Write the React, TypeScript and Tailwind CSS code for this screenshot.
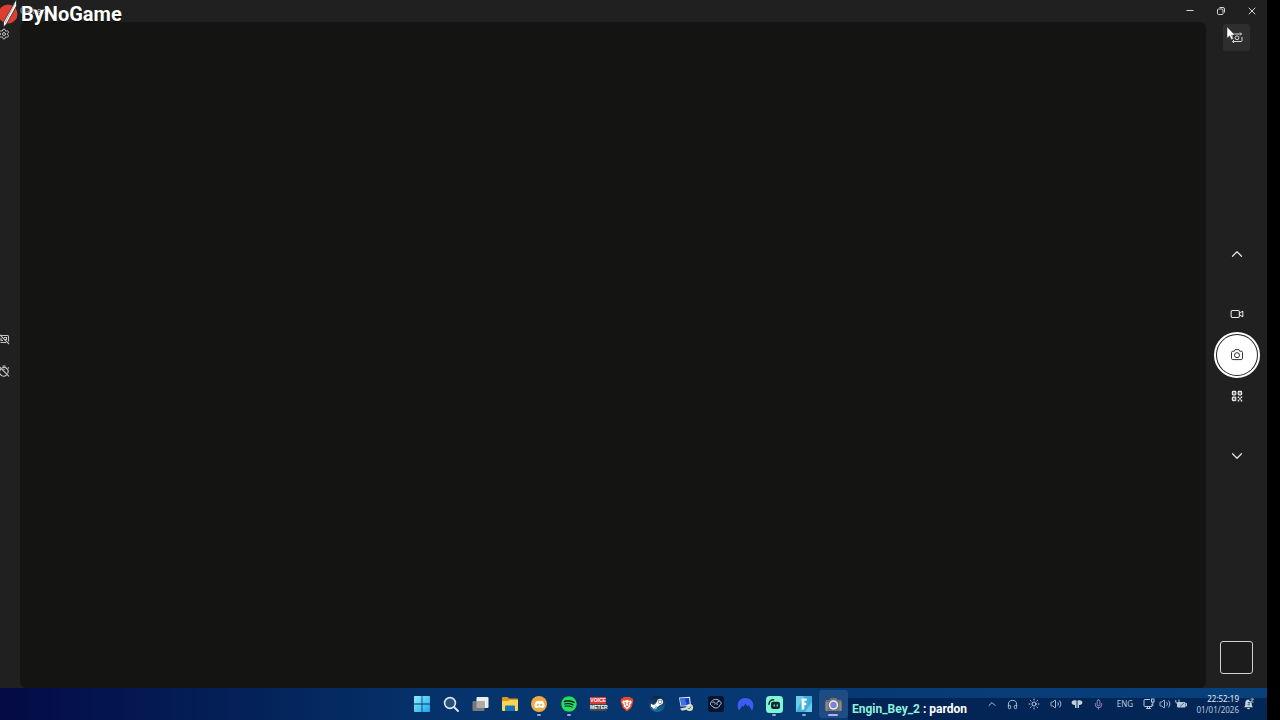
import type { ReactNode } from "react";
import { ChevronDown, ChevronUp, Headphones, Mic, Settings, Sun, Video, Volume2, X } from "lucide-react";
import { FaDiscord, FaSpotify, FaSteamSymbol } from "react-icons/fa";

function FlipCameraIcon() {
  return (
    <svg width="14" height="14" viewBox="0 0 14 14" fill="none" stroke="#d8d8d8" strokeWidth="1">
      <path d="M2.300 6.500V4q0-1 1-1H11.500M10 1.500 11.500 3 10 4.500M12 6v3.500q0 1-1 1H2.500M4 9 2.500 10.500 4 12" />
      <circle cx="7" cy="6.800" r="1.900" />
    </svg>
  );
}

function CameraOutline() {
  return (
    <svg width="14" height="14" viewBox="0 0 14 14" fill="none" stroke="#333" strokeWidth="1">
      <path d="M2.8 3.2h1.5l.8-1.6h3.8l.8 1.600h1.5c.7 0 1.300.5 1.300 1.200v6c0 .7-.6 1.200-1.300 1.200H2.8c-.7 0-1.300-.5-1.300-1.200v-6c0-.7.6-1.200 1.300-1.200Z" />
      <circle cx="7" cy="7.200" r="2.500" />
    </svg>
  );
}

function QrIcon() {
  return (
    <svg width="12" height="12" viewBox="0 0 12 12" fill="none" stroke="#e6e6e6" strokeWidth="1.2">
      <rect x="1.400" y="1.400" width="3.400" height="3.400" rx=".8" fill="#777" />
      <rect x="7.200" y="1.400" width="3.400" height="3.400" rx=".8" fill="#777" />
      <rect x="1.400" y="7.200" width="3.400" height="3.400" rx=".8" fill="#777" />
      <path d="M6.7 7.2h1.5M9.7 7.2h1.5M8.2 8.9h1.6M6.7 10.6h1.5M9.7 10.6h1.5" strokeWidth="1.6" />
    </svg>
  );
}

function HdrOffIcon() {
  return (
    <svg width="12" height="12" viewBox="0 0 12 12" fill="none" stroke="#c4c4c4" strokeWidth="1.1">
      <path d="M1 2.5h8.5a1 1 0 0 1 1 1v5M8 9.5H2.5M1.5 1.5l9.5 9.5M6 4.5h2.5v2H7M3 5v2.5h2" />
    </svg>
  );
}

function TimerOffIcon() {
  return (
    <svg width="12" height="12" viewBox="0 0 12 12" fill="none" stroke="#c4c4c4" strokeWidth="1.2">
      <path d="M4.5 1h3M4 3a4 4 0 0 1 5.5 5.5M8.5 10A4 4 0 0 1 2.8 4.2M1.5 1.8l9.5 9.5M10 2.5l.8.8M6 4v1" />
    </svg>
  );
}

function WindowsLogo() {
  return (
    <svg width="16" height="16" viewBox="0 0 16 16">
      <defs>
        <linearGradient id="win" x1="0" y1="0" x2="1" y2="1">
          <stop offset="0" stopColor="#8df0ff" />
          <stop offset="1" stopColor="#1ca4ec" />
        </linearGradient>
      </defs>
      <path fill="url(#win)" d="M0 .8Q0 0 .8 0h6.8v7.6H0ZM8.4 0h6.8q.8 0 .8.8v6.8H8.4ZM0 8.4h7.6V16H.8q-.8 0-.8-.8ZM8.4 8.4H16v6.8q0 .8-.8.8H8.4Z" />
    </svg>
  );
}

function SearchGlyph() {
  return (
    <svg width="16" height="16" viewBox="0 0 16 16">
      <circle cx="7" cy="7" r="5.4" fill="#28507c" stroke="#dce6ef" strokeWidth="1.6" />
      <path d="m11 11 4 4" stroke="#dce6ef" strokeWidth="1.9" strokeLinecap="round" />
    </svg>
  );
}

function TaskViewGlyph() {
  return (
    <svg width="17" height="16" viewBox="0 0 17 16">
      <rect x="4.5" y="1" width="12" height="11" rx="1" fill="#eeeeee" />
      <rect x=".5" y="5" width="12" height="10" rx="1" fill="#77797c" />
      <path d="M4.5 5h8v7h-8Z" fill="#a9abad" />
    </svg>
  );
}

function FolderGlyph() {
  return (
    <svg width="18" height="16" viewBox="0 0 18 16">
      <path d="M1 2q0-1 1-1h4.5L8 2.600H16q1 0 1 1V7H1Z" fill="#d99a1c" />
      <path d="M1 5h6l1.500-1H17v10q0 1-1 1H2q-1 0-1-1Z" fill="#fbd355" />
      <path d="M4 10.500q0-1 1-1h8q1 0 1 1V15H4Z" fill="#1673b8" />
    </svg>
  );
}

function BraveGlyph() {
  return (
    <svg width="14" height="16" viewBox="0 0 14 16">
      <path d="M4 1h6l1.300 1.300 1.400.2.800 2.300-2 6.700L7 15.500 2.500 11.500l-2-6.700.8-2.300 1.400-.2Z" fill="#f0462a" />
      <path d="m3 4.500 2 .2 2-.9 2 .9 2-.2.800 2-1.800 2.600.3 1.400L8 12.500l-1 .8-1-.8-2.300-2L4 9.100 2.200 6.500Z" fill="#fff" />
      <path d="M4.300 6.300 6 7l-.6 1.500.6 1.200M9.700 6.300 8 7l.6 1.500-.6 1.200M5.600 11l1.400-.8 1.400.8" fill="none" stroke="#f0462a" strokeWidth=".9" />
    </svg>
  );
}

function RemoteGlyph() {
  return (
    <svg width="16" height="16" viewBox="0 0 16 16">
      <path d="m1 1.500 11-.8 1 9.300-10.500.5Z" fill="#dce5f3" />
      <path d="m2.200 2.600 8.800-.6.800 7-8.500.4Z" fill="#163fc0" />
      <path d="m2.200 2.600 4.500-.3 2 6.800-5.400.3Z" fill="#3c74e8" />
      <path d="M2 12.500 9 11l1.500 2.300-6.500 1.500Z" fill="#cfd8e2" />
      <circle cx="11.600" cy="11.600" r="3.500" fill="#d9dfcf" />
      <path d="m10 11.800 1.200 1.200 2-2.600" fill="none" stroke="#5b7b52" />
    </svg>
  );
}

function PlanetGlyph() {
  return (
    <svg width="16" height="16" viewBox="0 0 16 16">
      <rect width="16" height="16" rx="2.500" fill="#071431" />
      <path d="M4 5.200C5.500 2.800 10 2.800 11.500 5c2.400 1 1.800 3.500.2 4.200C11 12.500 6 13 4.300 10 2 9.500 2 6.500 4 5.200ZM4.300 6.500c2-1.300 3.800.5 2.500 2M11.500 5.300C9 5.500 8.200 7 9.300 9" fill="none" stroke="#c1cbd8" strokeWidth="1" />
    </svg>
  );
}

function NordGlyph() {
  return (
    <svg width="17" height="14" viewBox="0 0 17 14">
      <path d="M2 13.500C-.8 9 .5 1 8.500 1S17.800 9 15 13.500L11.500 8l-1 1.600.4.8L8.500 6.500 6.300 10l-.9-1.500Z" fill="#3f5cf2" />
    </svg>
  );
}

function StreamlabsGlyph() {
  return (
    <svg width="17" height="17" viewBox="0 0 17 17">
      <rect width="17" height="17" rx="3.500" fill="#80f5d2" />
      <path d="M3 8.200C3 5.500 5 3.700 7.500 3.700" fill="none" stroke="#102631" strokeWidth="1.500" strokeLinecap="round" />
      <rect x="5" y="5.800" width="9" height="7.200" rx="2.200" fill="#102631" />
      <path d="M8.200 8.500v2M11.200 8.500v2" stroke="#80f5d2" strokeWidth="1.200" />
    </svg>
  );
}

function CameraAppGlyph() {
  return (
    <svg width="17" height="15" viewBox="0 0 17 15">
      <path d="M5.500 1h6l1 2h3q1 0 1 1v9q0 1-1 1h-14q-1 0-1-1V4q0-1 1-1h3Z" fill="#77736f" />
      <path d="M.5 5h2v9h-1q-1 0-1-1ZM14.500 5h2v8q0 1-1 1h-1Z" fill="#8f8a84" />
      <circle cx="8.500" cy="8" r="4.700" fill="#f2eef5" />
      <circle cx="8.500" cy="8" r="3.200" fill="#7185dd" />
    </svg>
  );
}

function BudsGlyph() {
  return (
    <svg width="12" height="12" viewBox="0 0 12 12" fill="#c5d0dd">
      <path d="M5.500 2.500v7.500H4V7C2 7.200.6 6 .6 4.500S2.200 1.500 5.500 2.500ZM6.500 2.500v7.500H8V7c2 .2 3.400-1 3.400-2.500S9.800 1.500 6.500 2.500Z" />
    </svg>
  );
}

function DisplayGlyph() {
  return (
    <svg width="12" height="12" viewBox="0 0 12 12" fill="none" stroke="#b9c8da" strokeWidth="1">
      <path d="M7 1.500H2q-1 0-1 1v5q0 1 1 1h7V6M3 10.500h5M4.500 8.500v2M6.500 8.500v2" />
      <rect x="8.500" y="1" width="2.500" height="3" />
      <path d="M9.800 4v4" />
    </svg>
  );
}

function BatteryGlyph() {
  return (
    <svg width="12" height="12" viewBox="0 0 12 12">
      <rect x="2" y="4" width="8.500" height="5.500" rx="1" fill="#b9c8da" />
      <path d="M10.500 5.500h1v2.500h-1M.8 2v2.500l1.500 1M4 1.500V4" fill="none" stroke="#b9c8da" />
      <path d="M5 8.500 9 5" stroke="#4b6387" />
    </svg>
  );
}

function SnoozeBellGlyph() {
  return (
    <svg width="12" height="12" viewBox="0 0 12 12">
      <path d="M5.500 1.500C3.500 1.500 2.300 3 2.300 5v2L1.200 9.300h8.600L8.800 7V5.500ZM4 10h3q-.2 1.300-1.500 1.300T4 10Z" fill="#cdd6e0" />
      <path d="M7.500 1h3L7.500 4h3M4.800 4.500H7l-2.200 2.300H7" fill="none" stroke="#cdd6e0" strokeWidth=".9" />
      <path d="M4.800 4.500H7l-2.200 2.300H7" fill="none" stroke="#24446f" strokeWidth=".8" />
    </svg>
  );
}

const apps: { name: string; icon: ReactNode; running?: boolean; active?: boolean }[] = [
  { name: "Start", icon: <WindowsLogo /> },
  { name: "Search", icon: <SearchGlyph /> },
  { name: "Task view", icon: <TaskViewGlyph /> },
  { name: "File Explorer", icon: <FolderGlyph /> },
  {
    name: "Discord",
    icon: (
      <span className="flex size-4 items-center justify-center rounded-full bg-[#efac42]">
        <FaDiscord size={11} color="#fff" />
      </span>
    ),
    running: true,
  },
  {
    name: "Spotify",
    icon: (
      <span className="flex rounded-full bg-[#0b2218]">
        <FaSpotify size={16} color="#25dc65" />
      </span>
    ),
    running: true,
  },
  {
    name: "Voicemeeter",
    icon: (
      <span className="flex w-4 flex-col text-center font-['Liberation_Sans'] text-[5px] leading-[7px] font-bold text-white">
        <span className="bg-[#dc3838]">VOICE</span>
        <span className="bg-[#45484f]">METER</span>
      </span>
    ),
  },
  { name: "Brave", icon: <BraveGlyph /> },
  {
    name: "Steam",
    icon: (
      <span className="flex size-4 items-center justify-center rounded-full bg-linear-to-b from-[#10213f] to-[#1470a4]">
        <FaSteamSymbol size={14} color="#fff" />
      </span>
    ),
  },
  { name: "Remote Desktop", icon: <RemoteGlyph /> },
  { name: "Planet", icon: <PlanetGlyph /> },
  { name: "NordVPN", icon: <NordGlyph /> },
  { name: "Streamlabs", icon: <StreamlabsGlyph />, running: true },
  {
    name: "Fortnite",
    icon: (
      <svg width="16" height="16" viewBox="0 0 16 16">
        <path d="M0 0h16v16H0Z" fill="#3bb0dd" />
        <path d="M0 0h8L0 16ZM16 6v10H9Z" fill="#6bcbea" />
        <path d="M5.500 2.500h5.300l-.2 2.300H8.300v2h2v2.200h-2v4.200l-2.600.6Z" fill="#fff" />
      </svg>
    ),
    running: true,
  },
  { name: "Camera", icon: <CameraAppGlyph />, running: true, active: true },
];

function TitleBar() {
  return (
    <header className="relative flex h-[22px] items-center justify-between">
      <span className="pl-5 text-[8px] text-[#b5b5b5]">Camera</span>
      <div className="flex items-center text-[#d6d6d6]">
        <button aria-label="Minimize" className="flex h-[22px] w-[30px] items-center justify-center">
          <svg width="8" height="8" viewBox="0 0 8 8" stroke="currentColor">
            <path d="M.5 3.500h7" />
          </svg>
        </button>
        <button aria-label="Restore" className="flex h-[22px] w-[31px] items-center justify-center">
          <svg width="8" height="8" viewBox="0 0 8 8" fill="none" stroke="currentColor">
            <rect x=".5" y="2" width="5.500" height="5.500" rx="1" />
            <path d="M2.500.5h3.500q1.500 0 1.500 1.500v3.500" />
          </svg>
        </button>
        <button aria-label="Close" className="flex h-[22px] w-[31px] items-center justify-center">
          <X size={12} strokeWidth={2} />
        </button>
      </div>
      {/* stream watermark sits over the window title */}
      <div className="absolute top-0 left-0 flex items-center">
        <svg width="21" height="28" viewBox="0 0 21 28">
          <circle cx="8" cy="14" r="9.500" fill="#dc3f30" />
          <path d="M16.500-1 3.500 22v5l3-3L16.500 6Z" fill="#fff" stroke="#252525" strokeWidth=".8" />
          <path d="M14.500 4 5 23" stroke="#8e8e8e" strokeWidth=".8" />
        </svg>
        <span className="font-[Roboto] text-[20px] leading-7 font-bold text-white [text-shadow:0_1px_1px_#000]">ByNoGame</span>
      </div>
    </header>
  );
}

function LeftRail() {
  return (
    <div className="grid grid-rows-[1fr_auto_1fr] overflow-hidden text-[#c4c4c4]">
      <div className="flex w-2 justify-center pt-1.5">
        <button aria-label="Settings" className="h-3 shrink-0">
          <Settings size={12} />
        </button>
      </div>
      <div className="flex w-2 flex-col items-center gap-5">
        <button aria-label="HDR off" className="h-3">
          <HdrOffIcon />
        </button>
        <button aria-label="Timer off" className="h-3">
          <TimerOffIcon />
        </button>
      </div>
    </div>
  );
}

function RightRail() {
  return (
    <div className="grid grid-rows-[1fr_auto_1fr] justify-items-center text-[#e6e6e6]">
      <button aria-label="Change camera" className="mt-0.5 flex size-[27px] items-center justify-center rounded-[3px] bg-[#2e2e2e]">
        <FlipCameraIcon />
      </button>
      <div className="flex flex-col items-center">
        <button aria-label="Previous mode" className="flex h-3 items-center">
          <ChevronUp size={18} strokeWidth={1.6} />
        </button>
        <button aria-label="Video" className="mt-12 flex h-3 items-center">
          <Video size={14} strokeWidth={1.8} />
        </button>
        <button aria-label="Take photo" className="my-3 flex size-[46px] items-center justify-center rounded-full border-2 border-white p-px">
          <span className="flex size-full items-center justify-center rounded-full bg-white">
            <CameraOutline />
          </span>
        </button>
        <button aria-label="Scan barcode" className="mb-12 h-3">
          <QrIcon />
        </button>
        <button aria-label="Next mode" className="flex h-3 items-center">
          <ChevronDown size={18} strokeWidth={1.6} />
        </button>
      </div>
      <button aria-label="Camera roll" className="mb-3.5 size-[33px] self-end rounded-[3px] border border-[#d0d0d0] bg-[#1c1c1c]" />
    </div>
  );
}

function Tray() {
  const cell = "flex flex-1 items-center justify-center";
  return (
    <div className="relative flex h-full w-[419px] items-center justify-end pr-2 font-['Noto_Sans'] text-[#b9c8da]">
      {/* chat overlay */}
      <div className="absolute inset-x-0 bottom-0 flex h-[22px] items-center bg-[#001540]/60 pl-1 font-[Roboto] text-[12px] font-bold whitespace-pre text-white">
        <span className="text-[#8ff0dc]">Engin_Bey_2</span> : pardon
      </div>
      <div className="relative flex w-[128px]">
        <button aria-label="Show hidden icons" className={cell}><ChevronUp size={12} /></button>
        <button aria-label="Headset" className={cell}><Headphones size={11} /></button>
        <button aria-label="Brightness" className={cell}><Sun size={12} /></button>
        <button aria-label="Sound device" className={cell}><Volume2 size={12} strokeWidth={1.8} /></button>
        <button aria-label="Earbuds" className={cell}><BudsGlyph /></button>
        <button aria-label="Microphone" className={cell}><Mic size={11} className="text-[#a68fc8]" /></button>
      </div>
      <button className="relative w-8 text-center text-[8px]">ENG</button>
      <button aria-label="Network, volume and battery" className="relative flex w-12 items-center justify-around">
        <DisplayGlyph />
        <Volume2 size={12} strokeWidth={1.8} />
        <BatteryGlyph />
      </button>
      <div className="relative w-[50px] text-right text-[8px] leading-[11px]">
        <div className="text-[#e4ebf3]">22:52:19</div>
        <div>01/01/2026</div>
      </div>
      <button aria-label="Notifications" className="relative flex w-5 justify-center">
        <SnoozeBellGlyph />
      </button>
    </div>
  );
}

export default function App() {
  return (
    <div className="flex min-h-screen flex-col bg-black pr-[13px] font-['Noto_Sans',sans-serif]">
      <main className="relative flex flex-1 flex-col bg-[#202020]">
        <TitleBar />
        <div className="grid flex-1 grid-cols-[20px_1fr_61px]">
          <LeftRail />
          <section aria-label="Camera preview" className="rounded-md bg-[#141413]" />
          <RightRail />
        </div>
        {/* mouse pointer */}
        <svg className="absolute top-[26px] right-[27px]" width="14" height="16" viewBox="0 0 14 16">
          <path d="M1 .8v11.400l2.600-2.300 1.800 3.800 2-.9-1.800-3.700H9Z" fill="#fff" stroke="#222" strokeWidth=".5" />
        </svg>
      </main>
      <footer className="flex h-8 items-center bg-linear-to-r from-[#040a44] via-[#06336b] via-35% to-[#08417c]">
        <nav aria-label="Taskbar" className="ml-auto grid h-full w-[441px] grid-cols-15">
          {apps.map((app) => (
            <button
              key={app.name}
              aria-label={app.name}
              className={`relative my-0.5 flex items-center justify-center rounded-[3px] ${app.active ? "bg-[#1f4c83]" : ""}`}
            >
              {app.icon}
              {app.running && (
                <span className={`absolute bottom-0.5 h-0.5 rounded-full ${app.active ? "w-2.5 bg-[#cba5ee]" : "w-1 bg-[#91aac5]"}`} />
              )}
            </button>
          ))}
        </nav>
        <Tray />
      </footer>
    </div>
  );
}
